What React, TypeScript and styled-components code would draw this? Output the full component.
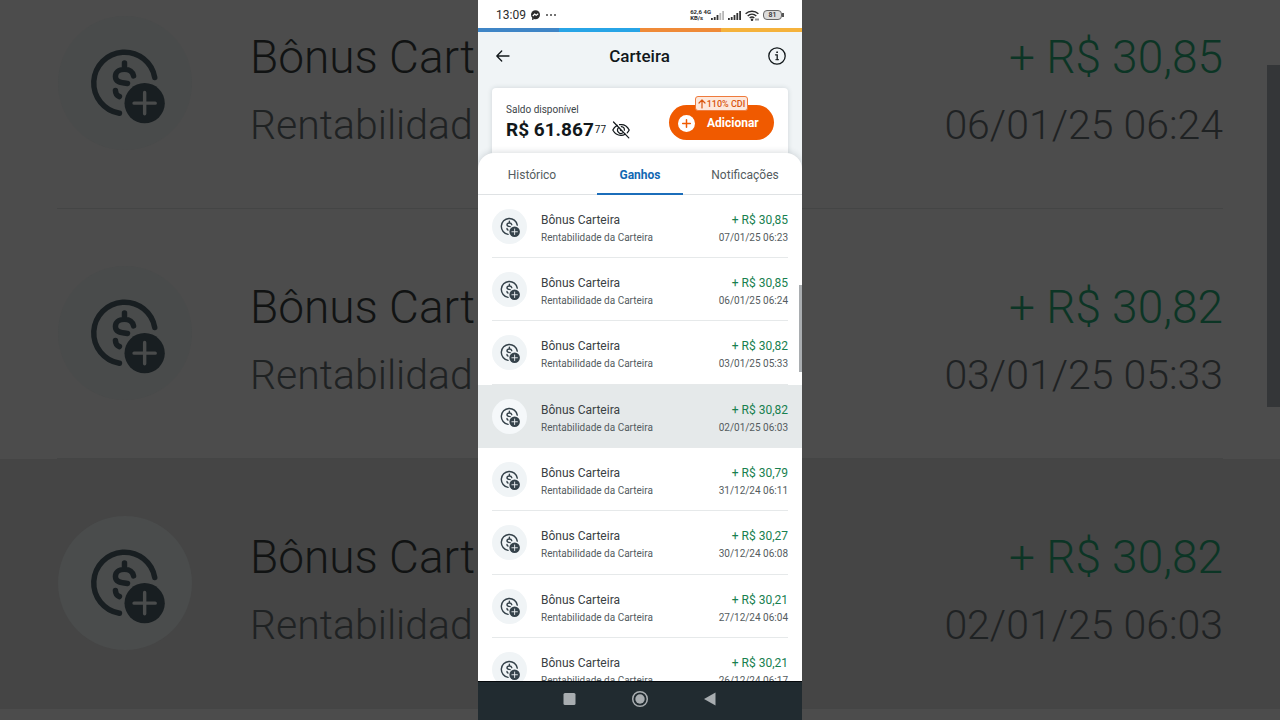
import React from "react";
import styled, { createGlobalStyle } from "styled-components";

const GlobalStyle = createGlobalStyle`
  *, *::before, *::after { box-sizing: border-box; }
  body {
    margin: 0;
    background: #4c4c4c;
    font-family: Roboto, "Liberation Sans", sans-serif;
    color: #12181b;
  }
  button { font: inherit; border: 0; padding: 0; background: none; cursor: pointer; }
  h1, h2, p, ul { margin: 0; padding: 0; font-weight: 400; }
  svg { display: block; flex: none; }
`;

/* ---------- Page ---------- */

const Page = styled.div`
  display: grid;
  grid-template-columns: minmax(0, 1fr) auto minmax(0, 1fr);
  height: 100vh;
  overflow: hidden;
`;

/* ---------- Enlarged side panels ---------- */

const Side = styled.div`
  display: flex;
  flex-direction: column;
  margin-top: -41px;
  overflow: hidden;
  position: relative;
`;

const SideRow = styled.div<{ $edge: "left" | "right"; $active?: boolean }>`
  display: flex;
  flex: none;
  height: 250px;
  gap: 58px;
  white-space: nowrap;
  padding-top: 57px;
  justify-content: ${(p) => (p.$edge === "left" ? "flex-start" : "flex-end")};
  padding-left: ${(p) => (p.$edge === "left" ? "58px" : "0")};
  padding-right: ${(p) => (p.$edge === "right" ? "57px" : "0")};
  background: ${(p) => (p.$active ? "#454545" : "#4c4c4c")};
  background-image: linear-gradient(#444545, #444545);
  background-repeat: no-repeat;
  background-size: calc(100% - 57px) 1px;
  background-position: ${(p) => (p.$edge === "left" ? "right bottom" : "left bottom")};
`;

const SideText = styled.div<{ $edge: "left" | "right" }>`
  display: flex;
  flex-direction: column;
  gap: 12px;
  text-align: ${(p) => p.$edge};
`;

const SideTitle = styled.p<{ $green?: boolean }>`
  font-size: 46px;
  line-height: 56px;
  font-weight: 300;
  margin-top: 13px;
  color: ${(p) => (p.$green ? "#0c3525" : "#111313")};
`;

const SideSub = styled.p`
  font-size: 41px;
  line-height: 56px;
  font-weight: 300;
  color: #1f2223;
`;

const SideThumb = styled.div`
  position: absolute;
  right: 0;
  top: 106px;
  width: 13px;
  height: 342px;
  background: #343638;
`;

/* ---------- Phone ---------- */

const Phone = styled.main`
  display: flex;
  flex-direction: column;
  height: 100vh;
  aspect-ratio: 9 / 20;
  background: #f0f4f6;
  overflow: hidden;
`;

const StatusBar = styled.div`
  display: flex;
  align-items: center;
  flex: none;
  height: 28px;
  padding: 2px 18px 0;
  background: #fff;
  color: #2b2b2b;
`;

const Clock = styled.span`
  font-size: 12px;
  line-height: 16px;
  margin-right: 4px;
`;

const StatusRight = styled.div`
  display: flex;
  align-items: center;
  gap: 4px;
  margin-left: auto;
`;

const Speed = styled.span`
  font-size: 6px;
  line-height: 6px;
  font-weight: 700;
  white-space: pre;
`;

const SpeedGroup = styled.div`
  display: flex;
  align-items: center;
`;

const Battery = styled.span`
  display: flex;
  align-items: center;
  justify-content: center;
  position: relative;
  width: 19px;
  height: 10px;
  margin-right: 2px;
  border: 1px solid #666;
  border-radius: 4px;
  background: #dcdcdc;
  font-size: 7px;
  line-height: 8px;
  font-weight: 500;
  &::after {
    content: "";
    position: absolute;
    right: -3px;
    top: 2px;
    width: 2px;
    height: 4px;
    background: #555;
  }
`;

const Stripe = styled.div`
  display: grid;
  grid-template-columns: repeat(4, 1fr);
  flex: none;
  height: 4px;
`;

const StripePart = styled.span<{ $color: string }>`
  background: ${(p) => p.$color};
`;

const Header = styled.header`
  display: flex;
  align-items: center;
  justify-content: space-between;
  flex: none;
  height: 48px;
  padding: 0 16px 0 17px;
`;

const Title = styled.h1`
  font-size: 17px;
  line-height: 24px;
  font-weight: 500;
`;

const IconButton = styled.button`
  color: #12181b;
`;

const Card = styled.section`
  display: flex;
  justify-content: space-between;
  flex: none;
  height: 81px;
  margin: 8px 14px 0;
  padding: 14px 14px 0;
  background: #fff;
  border-radius: 4px 4px 0 0;
  box-shadow: 0 0 5px rgba(30, 50, 60, 0.16);
`;

const BalanceLabel = styled.p`
  font-size: 10px;
  line-height: 16px;
  color: #3c4448;
`;

const Balance = styled.div`
  display: flex;
  align-items: center;
  height: 24px;
`;

const Amount = styled.strong`
  font-size: 19px;
  line-height: 24px;
  font-weight: 700;
`;

const Cents = styled.span`
  font-size: 10px;
  line-height: 12px;
  margin: 0 6px 0 1px;
`;

const AddButton = styled.button`
  display: flex;
  align-items: center;
  gap: 12px;
  position: relative;
  width: 105px;
  height: 35px;
  margin-top: 3px;
  padding: 1px 9px 0;
  border-radius: 18px;
  background: #f05a00;
  color: #fff;
  font-size: 12px;
  line-height: 16px;
  font-weight: 700;
`;

const Badge = styled.span`
  display: flex;
  align-items: center;
  justify-content: center;
  gap: 1px;
  position: absolute;
  left: 26px;
  top: -9px;
  width: 53px;
  height: 15px;
  border: 1px solid #ee7a3c;
  border-radius: 3px;
  background: #fde8dc;
  color: #d9560f;
  font-size: 9px;
  line-height: 12px;
  font-weight: 500;
  white-space: nowrap;
`;

const Sheet = styled.section`
  display: flex;
  flex-direction: column;
  flex: 1;
  min-height: 0;
  margin-top: -16px;
  position: relative;
  background: #fff;
  border-radius: 16px 16px 0 0;
  box-shadow: 0 -1px 6px rgba(30, 50, 60, 0.16);
`;

const Tabs = styled.div`
  display: grid;
  grid-template-columns: repeat(3, 1fr);
  flex: none;
  height: 42px;
  border-bottom: 1px solid #dfe2e4;
`;

const Tab = styled.button<{ $active?: boolean }>`
  height: 42px;
  margin: 0 11px;
  padding-top: 4px;
  white-space: nowrap;
  font-size: 12px;
  line-height: 16px;
  font-weight: ${(p) => (p.$active ? 700 : 400)};
  color: ${(p) => (p.$active ? "#1268b3" : "#545c60")};
  border-bottom: 2px solid ${(p) => (p.$active ? "#1b6dba" : "transparent")};
  &:last-child { margin: 0 14px 0 8px; }
`;

const List = styled.ul`
  flex: 1;
  min-height: 0;
  overflow: hidden;
  list-style: none;
`;

const Row = styled.li<{ $active?: boolean }>`
  display: flex;
  height: 63px;
  padding: 14px 14px 0;
  background: ${(p) => (p.$active ? "#e5e9ea" : "#fff")};
  background-image: linear-gradient(#e6e9ea, #e6e9ea);
  background-repeat: no-repeat;
  background-size: calc(100% - 28px) 1px;
  background-position: center bottom;
  &:nth-child(3n) { height: 64px; }
`;

const RowText = styled.div<{ $end?: boolean }>`
  display: flex;
  flex-direction: column;
  gap: 2px;
  white-space: nowrap;
  margin-left: ${(p) => (p.$end ? "auto" : "14px")};
  text-align: ${(p) => (p.$end ? "right" : "left")};
`;

const RowTitle = styled.p<{ $green?: boolean }>`
  font-size: 12px;
  line-height: 16px;
  margin-top: 3px;
  color: ${(p) => (p.$green ? "#17804f" : "#3a4144")};
`;

const RowSub = styled.p`
  font-size: 10px;
  line-height: 16px;
  color: #545c60;
`;

const Thumb = styled.div`
  position: absolute;
  right: 0;
  top: 132px;
  width: 3px;
  height: 87px;
  background: #a9adb0;
`;

const NavBar = styled.nav`
  display: flex;
  align-items: center;
  justify-content: center;
  gap: 52px;
  flex: none;
  height: 39px;
  padding-bottom: 4px;
  border-top: 1px solid #05080a;
  background: #212b30;
  color: #a8adb0;
`;

/* ---------- Icons ---------- */

function CoinIcon({ size, disc, ink }: { size: number; disc: string; ink: string }) {
  return (
    <svg width={size} height={size} viewBox="0 0 133 133" fill="none" aria-hidden="true">
      <circle cx="66.5" cy="66.5" r="66.5" fill={disc} />
      <g stroke={ink} strokeWidth="5.4" strokeLinecap="round">
        <path d="M61 96.500A30.500 30.500 0 1 1 96 61" />
        <path d="M66 46.500V52M75 59.500C74 55 71 53 66 53C60 53 57 56.500 57 60C57 65 61 66 69 67" />
        <path d="M57 74C57 77 58.500 79 61 80" />
      </g>
      <circle cx="86" cy="86.500" r="20" fill={ink} />
      <path d="M75.500 86.500H96.500M86 76V97" stroke={disc} strokeWidth="3.400" strokeLinecap="round" />
    </svg>
  );
}

function SignalIcon({ weak }: { weak?: boolean }) {
  return (
    <svg width="13" height="9" viewBox="0 0 13 9" fill="#333" aria-hidden="true">
      <rect x="0" y="7" width="1.800" height="2" />
      <rect x="2.800" y="6" width="1.800" height="3" />
      <rect x="5.600" y="4" width="1.800" height="5" />
      <rect x="8.400" y="2" width="1.800" height="7" opacity={weak ? 0.35 : 1} />
      <rect x="11.200" y="0" width="1.800" height="9" opacity={weak ? 0.35 : 1} />
    </svg>
  );
}

function WifiIcon() {
  return (
    <svg width="14" height="11" viewBox="0 0 14 11" fill="none" stroke="#2b2b2b" strokeWidth="1.400" aria-hidden="true">
      <path d="M.6 3.800C4.300.3 9.700.3 13.400 3.800" />
      <path d="M2.700 6C5.200 3.700 8.800 3.700 11.300 6" />
      <path d="M4.700 8.100C6 6.900 8 6.900 9.300 8.100" />
      <circle cx="7" cy="9.700" r=".6" fill="#2b2b2b" />
      <path d="M11 8.500V10.500M13 8.500V10.500" strokeWidth="1" />
    </svg>
  );
}

function EyeOffIcon() {
  return (
    <svg width="18" height="18" viewBox="0 0 18 18" fill="none" stroke="currentColor" strokeWidth="1.200" strokeLinecap="round" aria-hidden="true">
      <path d="M5.300 4.300C3.300 5.400 1.700 7.200.8 9C2.600 12.400 5.600 14.400 9 14.400C10.500 14.400 11.900 14 13.200 13.200" />
      <path d="M7.500 3.700C11.500 3 15.300 5.200 17.200 9C16.700 10.100 16 11 15.200 11.800" />
      <path d="M6.600 6.600A3.400 3.400 0 0 0 11.200 11.600M9.300 5.600A3.400 3.400 0 0 1 12.400 9.200" />
      <path d="M8.300 8.700A1 1 0 0 0 9.300 9.700" />
      <path d="M1.500 1L16.800 16.800" />
    </svg>
  );
}

/* ---------- Data ---------- */

const earnings = [
  { amount: "+ R$ 30,85", date: "07/01/25 06:23" },
  { amount: "+ R$ 30,85", date: "06/01/25 06:24" },
  { amount: "+ R$ 30,82", date: "03/01/25 05:33" },
  { amount: "+ R$ 30,82", date: "02/01/25 06:03", active: true },
  { amount: "+ R$ 30,79", date: "31/12/24 06:11" },
  { amount: "+ R$ 30,27", date: "30/12/24 06:08" },
  { amount: "+ R$ 30,21", date: "27/12/24 06:04" },
  { amount: "+ R$ 30,21", date: "26/12/24 06:17" },
];

const enlarged = earnings.slice(1, 4);

export default function App() {
  return (
    <>
      <GlobalStyle />
      <Page>
        <Side aria-hidden="true">
          {enlarged.map((e) => (
            <SideRow key={e.date} $edge="left" $active={e.active}>
              <CoinIcon size={134} disc={e.active ? "#4a4c4c" : "#494b4b"} ink="#181e21" />
              <SideText $edge="left">
                <SideTitle>Bônus Cart</SideTitle>
                <SideSub>Rentabilidad</SideSub>
              </SideText>
            </SideRow>
          ))}
          <SideRow $edge="left" />
        </Side>

        <Phone>
          <StatusBar>
            <Clock>13:09</Clock>
            <svg width="28" height="10" viewBox="0 0 28 10" aria-hidden="true">
              <circle cx="5.500" cy="4.800" r="4.500" fill="#2b2b2b" />
              <path d="M2 8L2 10L4.500 9Z" fill="#2b2b2b" />
              <path d="M2.800 6L4.700 4L6.200 5.300L8.200 3.700" fill="none" stroke="#fff" strokeWidth="1.200" />
              <g fill="#444">
                <circle cx="17" cy="5" r="1" />
                <circle cx="21" cy="5" r="1" />
                <circle cx="25" cy="5" r="1" />
              </g>
            </svg>
            <StatusRight>
              <SpeedGroup>
                <Speed>{"62,6 4G\nKB/s"}</Speed>
                <SignalIcon weak />
              </SpeedGroup>
              <SignalIcon />
              <WifiIcon />
              <Battery>81</Battery>
            </StatusRight>
          </StatusBar>
          <Stripe>
            <StripePart $color="#3f85c6" />
            <StripePart $color="#27a4e6" />
            <StripePart $color="#ef8a38" />
            <StripePart $color="#f5b23c" />
          </Stripe>

          <Header>
            <IconButton aria-label="Voltar">
              <svg width="16" height="16" viewBox="0 0 16 16" fill="none" stroke="currentColor" strokeWidth="1.300" strokeLinecap="round" strokeLinejoin="round">
                <path d="M14 8H2M6.700 3L1.800 8L6.700 13" />
              </svg>
            </IconButton>
            <Title>Carteira</Title>
            <IconButton aria-label="Informações">
              <svg width="18" height="18" viewBox="0 0 18 18" fill="none" stroke="currentColor" strokeWidth="1.300" strokeLinecap="round">
                <circle cx="9" cy="9" r="8.200" />
                <path d="M7.500 7.800H9.200V12.500" />
                <path d="M7.800 12.700H10.600" strokeWidth="1" />
                <circle cx="9" cy="5.200" r=".5" fill="currentColor" strokeWidth=".8" />
              </svg>
            </IconButton>
          </Header>

          <Card>
            <div>
              <BalanceLabel>Saldo disponível</BalanceLabel>
              <Balance>
                <Amount>R$ 61.867</Amount>
                <Cents>77</Cents>
                <IconButton aria-label="Ocultar saldo">
                  <EyeOffIcon />
                </IconButton>
              </Balance>
            </div>
            <AddButton>
              <svg width="17" height="17" viewBox="0 0 17 17" aria-hidden="true">
                <circle cx="8.500" cy="8.500" r="8.500" fill="#fff" />
                <path d="M4.700 8.500H12.300M8.500 4.700V12.300" stroke="#f05a00" strokeWidth="1.500" strokeLinecap="round" />
              </svg>
              Adicionar
              <Badge>
                <svg width="8" height="10" viewBox="0 0 8 10" fill="none" stroke="currentColor" strokeWidth="1.200" strokeLinecap="round" strokeLinejoin="round" aria-hidden="true">
                  <path d="M4 9V1M1 4L4 1L7 4" />
                </svg>
                110% CDI
              </Badge>
            </AddButton>
          </Card>

          <Sheet>
            <Tabs role="tablist">
              <Tab role="tab">Histórico</Tab>
              <Tab role="tab" $active aria-selected="true">Ganhos</Tab>
              <Tab role="tab">Notificações</Tab>
            </Tabs>
            <List>
              {earnings.map((e) => (
                <Row key={e.date} $active={e.active}>
                  <CoinIcon size={35} disc={e.active ? "#f5f8fa" : "#f0f4f6"} ink="#35424a" />
                  <RowText>
                    <RowTitle>Bônus Carteira</RowTitle>
                    <RowSub>Rentabilidade da Carteira</RowSub>
                  </RowText>
                  <RowText $end>
                    <RowTitle $green>{e.amount}</RowTitle>
                    <RowSub>{e.date}</RowSub>
                  </RowText>
                </Row>
              ))}
            </List>
            <Thumb />
          </Sheet>

          <NavBar>
            <IconButton aria-label="Recentes">
              <svg width="18" height="18" viewBox="0 0 18 18" fill="#a8adb0">
                <rect x="2.500" y="3" width="12" height="12" rx="1.500" />
              </svg>
            </IconButton>
            <IconButton aria-label="Início">
              <svg width="18" height="18" viewBox="0 0 18 18" fill="none">
                <circle cx="9" cy="9" r="7.300" stroke="#a8adb0" strokeWidth="1.500" />
                <circle cx="9" cy="9" r="4.700" fill="#a8adb0" />
              </svg>
            </IconButton>
            <IconButton aria-label="Anterior">
              <svg width="18" height="18" viewBox="0 0 18 18" fill="#a8adb0">
                <path d="M14.500 2.500V15.500L3 9Z" />
              </svg>
            </IconButton>
          </NavBar>
        </Phone>

        <Side aria-hidden="true">
          {enlarged.map((e) => (
            <SideRow key={e.date} $edge="right" $active={e.active}>
              <SideText $edge="right">
                <SideTitle $green>{e.amount}</SideTitle>
                <SideSub>{e.date}</SideSub>
              </SideText>
            </SideRow>
          ))}
          <SideRow $edge="right" />
          <SideThumb />
        </Side>
      </Page>
    </>
  );
}
